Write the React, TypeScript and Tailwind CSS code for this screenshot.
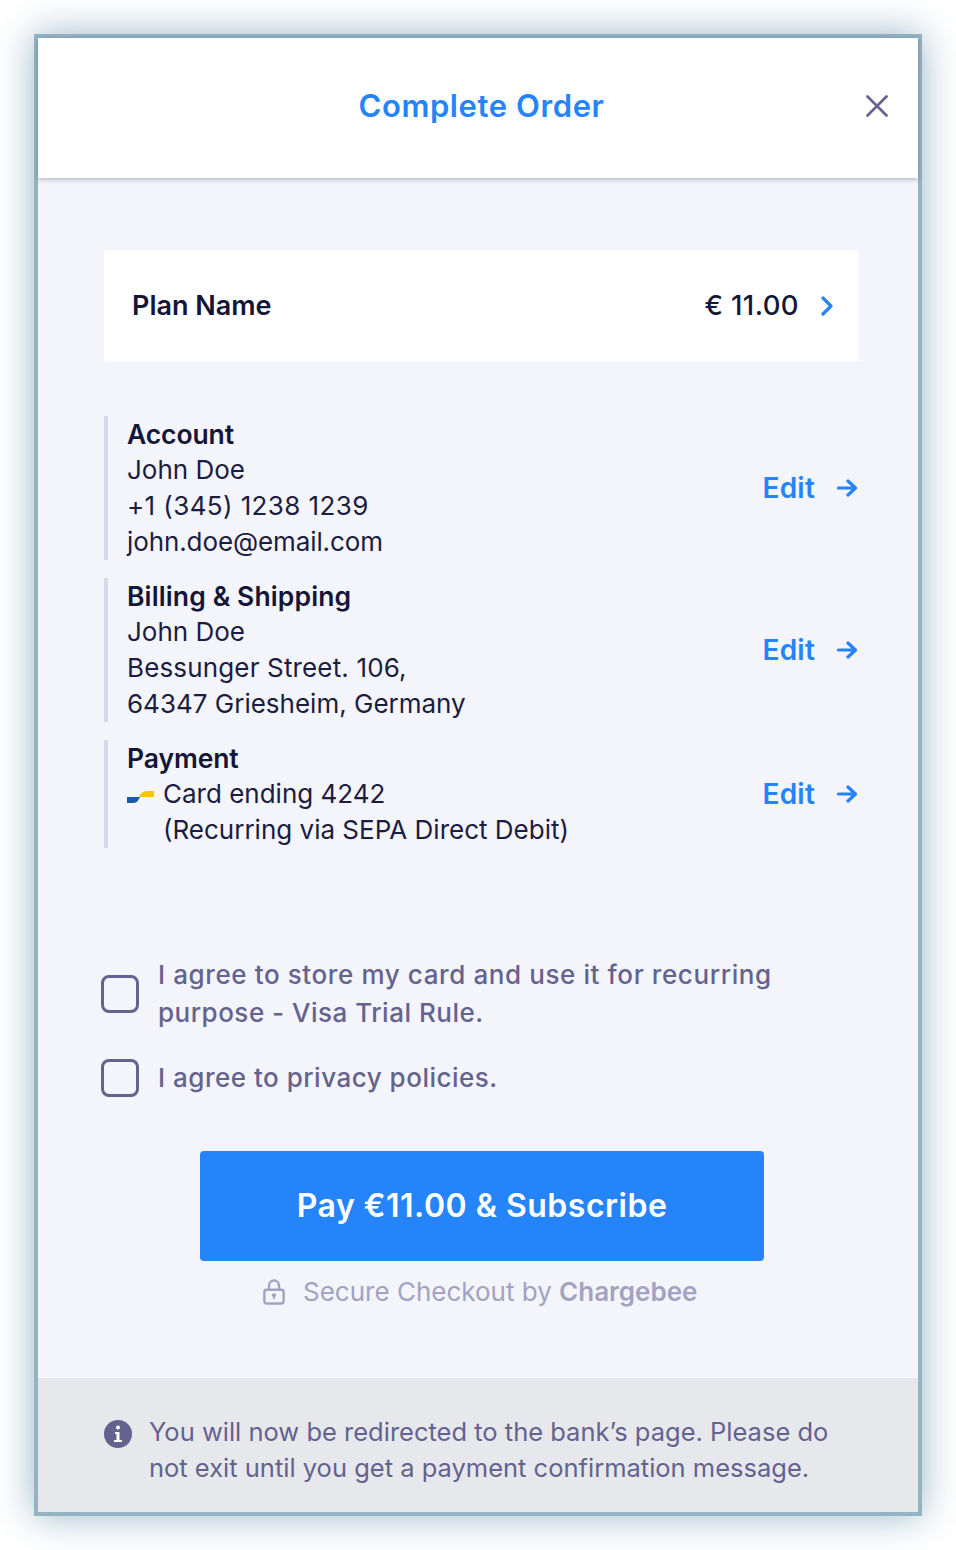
import React from "react";

const Arrow = () => (
  <svg width="20" height="18" viewBox="0 0 20 18" fill="none" stroke="#2684fb" strokeWidth="3.2" strokeLinecap="round" strokeLinejoin="round">
    <path d="M1.5 9h16.5M11 2l7.5 7-7.5 7" />
  </svg>
);

function Row({ title, titleClass, h, children }: { title: string; titleClass: string; h: string; children?: React.ReactNode }) {
  return (
    <div className={`flex items-center justify-between border-l-[4px] border-[#d8d8ea] pl-[19px] ${h}`}>
      <div className="text-[26px] leading-[36px] text-[#1c1c40]">
        <div className={`text-[26.5px] font-semibold text-[#151538] ${titleClass}`}>{title}</div>
        {children}
      </div>
      <div className="flex items-center gap-[22px] pb-px pr-[2px]">
        <span className="text-[28px] font-semibold leading-[36px] tracking-[0.2px] text-[#2684fb]">Edit</span>
        <Arrow />
      </div>
    </div>
  );
}

function Check({ children }: { children: React.ReactNode }) {
  return (
    <label className="flex items-center gap-[19px]">
      <span className="h-[38px] w-[38px] shrink-0 rounded-[8px] border-[3.5px] border-[#64628f]" />
      <span className="text-[26px] font-medium leading-[38px] tracking-[0.5px] text-[#64628f]">{children}</span>
    </label>
  );
}

export default function App() {
  return (
    <div className="h-[1550px] w-[956px] bg-white pl-[34px] pt-[34px] font-['Inter',sans-serif]">
      <div className="flex h-[1482px] w-[888px] flex-col border-[4px] border-[#94b3c3] bg-[#f3f5fa] shadow-[0_0_36px_rgba(100,145,170,0.65)]">
        <header className="relative flex h-[140px] shrink-0 items-center justify-center bg-white pb-[4px] pl-[7px] shadow-[0_1px_5px_rgba(80,70,110,0.45)]">
          <h1 className="text-[31px] font-semibold tracking-[0.6px] text-[#2684fb]">Complete Order</h1>
          <button className="absolute right-[30px] top-[57px] text-[#64628f]">
            <svg className="block" width="22" height="22" viewBox="0 0 22 22" fill="none" stroke="currentColor" strokeWidth="2.7" strokeLinecap="round">
              <path d="M1.5 1.5l19 19M20.5 1.5l-19 19" />
            </svg>
          </button>
        </header>

        <main className="flex flex-1 flex-col pl-[66px] pr-[59px] pt-[72px]">
          <div className="flex h-[112px] items-center justify-between rounded-[4px] bg-white pl-[28px] pr-[26px]">
            <span className="text-[27px] font-semibold text-[#151538]">Plan Name</span>
            <div className="flex items-center gap-[22px]">
              <span className="text-[27.5px] font-medium tracking-[0.4px] text-[#151538]">€ 11.00</span>
              <svg width="12" height="20" viewBox="0 0 12 20" fill="none" stroke="#2684fb" strokeWidth="3.2" strokeLinecap="round" strokeLinejoin="round">
                <path d="M2 2l8 8-8 8" />
              </svg>
            </div>
          </div>

          <div className="mt-[54px] flex flex-col gap-[18px]">
            <Row title="Account" titleClass="tracking-[-0.1px]" h="h-[144px]">
              <div>John Doe</div>
              <div className="tracking-[0.4px]">+1 (345) 1238 1239</div>
              <div className="tracking-[-0.1px]">john.doe@email.com</div>
            </Row>
            <Row title="Billing & Shipping" titleClass="tracking-[0.12px]" h="h-[144px]">
              <div>John Doe</div>
              <div className="tracking-[0.15px]">Bessunger Street. 106,</div>
              <div>64347 Griesheim, Germany</div>
            </Row>
            <Row title="Payment" titleClass="tracking-[-0.1px]" h="h-[108px]">
              <div className="flex items-center gap-[9px]">
                <svg width="27" height="12" viewBox="0 0 27 12" className="mt-[6px] shrink-0">
                  <path d="M0 6h10c2 0 3-.5 4-1.5L11 9.5C10 11 8.5 12 6.5 12H0z" fill="#1a5aa8" />
                  <path d="M27 0h-7c-3 0-5 1-7 4l-1 2h15z" fill="#fcc30d" />
                </svg>
                <span>Card ending 4242</span>
              </div>
              <div className="pl-[36px]">(Recurring via SEPA Direct Debit)</div>
            </Row>
          </div>

          <div className="-ml-[3px] mt-[108px] flex flex-col gap-[27px]">
            <Check>
              <span className="tracking-[0.6px]">I agree to store my card and use it for recurring</span>
              <br />
              purpose - Visa Trial Rule.
            </Check>
            <Check>I agree to privacy policies.</Check>
          </div>

          <button className="ml-[96px] mt-[54px] h-[110px] w-[564px] rounded-[4px] bg-[#2684fb] text-[32px] font-semibold tracking-[0.5px] text-white">
            Pay €11.00 &amp; Subscribe
          </button>

          <div className="ml-[159px] mt-[13px] flex items-center gap-[18px] text-[26px] leading-[36px] text-[#a3a2c2]">
            <svg width="22" height="26" viewBox="0 0 24 28" fill="none" stroke="#a3a2c2" strokeWidth="2.6" strokeLinejoin="round">
              <rect x="1.5" y="11.5" width="21" height="15" rx="2.5" />
              <path d="M6.5 11.5V7a5.5 5.5 0 0111 0v4.5" />
              <circle cx="12" cy="17.5" r="2.2" fill="#a3a2c2" stroke="none" />
              <path d="M12 18v3.5" strokeWidth="2" />
            </svg>
            <span>
              Secure Checkout by <b className="font-semibold">Chargebee</b>
            </span>
          </div>
        </main>

        <footer className="flex h-[134px] shrink-0 gap-[17px] bg-[#e7e8ec] pl-[66px] pt-[36px] text-[25.5px] leading-[36px] text-[#64628f]">
          <svg className="mt-[6px] shrink-0" width="28" height="28" viewBox="0 0 28 28">
            <circle cx="14" cy="14" r="14" fill="#64628f" />
            <circle cx="14" cy="7.5" r="2" fill="#fff" />
            <path d="M11 12h4.5v8H18v2h-8v-2h2.5v-6H11z" fill="#fff" />
          </svg>
          <div>
            You will now be redirected to the bank’s page. Please do
            <br />
            not exit until you get a payment confirmation message.
          </div>
        </footer>
      </div>
    </div>
  );
}
